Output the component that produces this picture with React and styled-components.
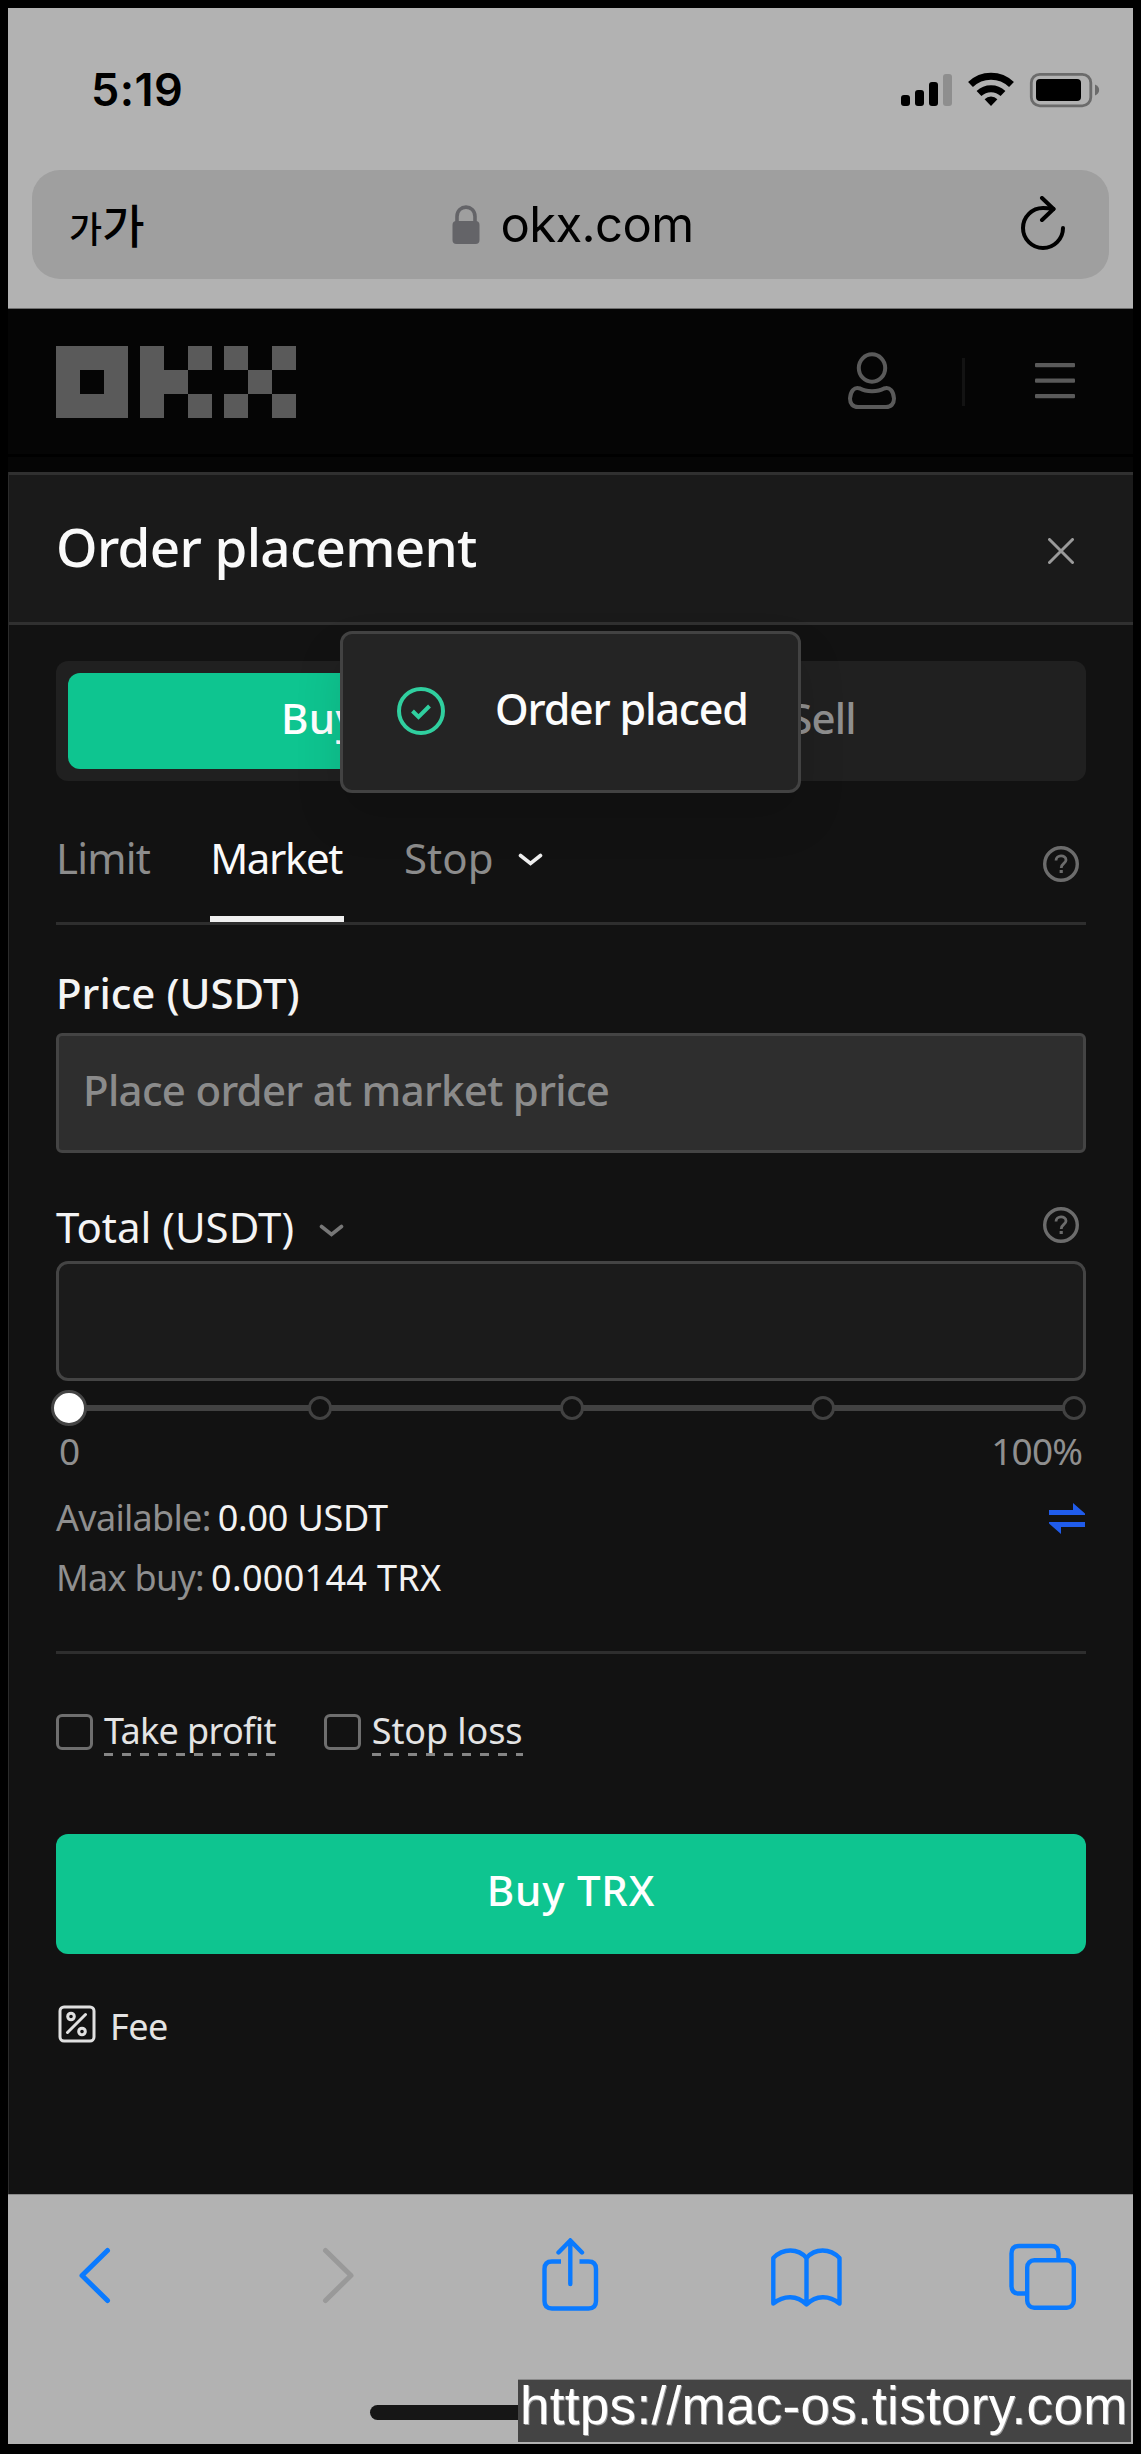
import React from 'react';
import styled, { createGlobalStyle } from 'styled-components';

const GlobalStyle = createGlobalStyle`
  * {
    box-sizing: border-box;
  }

  body {
    margin: 0;
    background-color: #000000;
    font-family: 'Noto Sans', 'Noto Sans CJK KR', sans-serif;
  }

  svg {
    display: block;
    flex-shrink: 0;
  }
`;

const Phone = styled.div`
  position: relative;
  display: flex;
  flex-direction: column;
  width: 1141px;
  height: 2454px;
  border: 8px solid #000000;
  border-bottom-width: 10px;
  background-color: #121212;
  overflow: hidden;
  white-space: nowrap;
`;

/* Safari top */

const BrowserTop = styled.div`
  height: 301px;
  padding: 0 24px;
  background-color: #b2b2b2;
  border-bottom: 1px solid #6e6e6e;
`;

const StatusBar = styled.div`
  display: flex;
  align-items: center;
  justify-content: space-between;
  height: 162px;
  padding: 2px 9px 0 59px;
`;

const Clock = styled.span`
  font-family: Inter, sans-serif;
  font-size: 45px;
  font-weight: 600;
  line-height: 60px;
  letter-spacing: 0.4px;
  color: #000000;
`;

const UrlBar = styled.div`
  display: grid;
  grid-template-columns: 1fr auto 1fr;
  align-items: center;
  height: 109px;
  padding: 0 43px 0 37px;
  border-radius: 28px;
  background-color: #9f9f9f;
`;

const TextSize = styled.div`
  display: flex;
  align-items: baseline;
  font-family: 'Noto Sans CJK KR', sans-serif;
  line-height: 60px;
  color: #000000;
`;

const Ga = styled.span`
  font-size: ${(props) => props.$size}px;
  font-weight: 500;
`;

const Domain = styled.div`
  display: flex;
  align-items: center;
  gap: 20px;
  margin-left: 11px;
  font-family: Inter, sans-serif;
  font-size: 49px;
  line-height: 60px;
  letter-spacing: -0.6px;
  color: #000000;
`;

const ReloadSlot = styled.div`
  justify-self: end;
`;

/* OKX header behind the sheet */

const SiteHeader = styled.div`
  display: flex;
  align-items: center;
  height: 148px;
  padding: 0 58px 0 48px;
  background-color: #050505;
  border-bottom: 3px solid #000000;
`;

const HeaderTools = styled.div`
  display: flex;
  align-items: center;
  margin: 0 0 2px auto;
`;

const HeaderDivider = styled.div`
  width: 3px;
  height: 48px;
  margin: 2px 70px 0 66px;
  background-color: #131313;
`;

const PageStrip = styled.div`
  height: 15px;
  background-color: #050505;
`;

/* Order sheet */

const Sheet = styled.div`
  flex: 1;
  border-left: 1px solid #2b2b2b;
`;

const SheetHeader = styled.div`
  display: flex;
  align-items: center;
  justify-content: space-between;
  height: 153px;
  padding: 4px 59px 0 47px;
  border-top: 3px solid #303030;
  border-bottom: 3px solid #303030;
  background-color: #1a1a1a;
`;

const SheetTitle = styled.h1`
  margin: 0 0 7px;
  font-size: 53px;
  font-weight: 500;
  line-height: 72px;
  letter-spacing: -0.65px;
  color: #fafafa;
`;

const SheetBody = styled.div`
  padding: 36px 47px 0 47px;
`;

const SideSwitch = styled.div`
  display: flex;
  height: 120px;
  padding: 12px;
  border-radius: 12px;
  background-color: #202020;
`;

const SideButton = styled.div`
  flex: 1;
  padding-bottom: 8px;
  border-radius: 12px;
  background-color: ${(props) => (props.$active ? '#0ec590' : 'transparent')};
  color: ${(props) => (props.$active ? '#ffffff' : '#8f8f8f')};
  font-size: 42px;
  font-weight: 500;
  line-height: 89px;
  letter-spacing: ${(props) => (props.$active ? 0.4 : -0.8)}px;
  text-align: center;
`;

const Tabs = styled.div`
  display: flex;
  height: 144px;
  padding-top: 46px;
  border-bottom: 3px solid #2e2e2e;
`;

const Tab = styled.div`
  display: flex;
  height: 95px;
  margin-right: 60px;
  padding-right: ${(props) => (props.$active ? 2 : 0)}px;
  border-bottom: 6px solid ${(props) => (props.$active ? '#efefef' : 'transparent')};
  color: ${(props) => (props.$active ? '#fafafa' : '#8c8c8c')};
  font-size: 42px;
  line-height: 61px;
  letter-spacing: ${(props) => props.$spacing}px;

  svg {
    margin: 26px 0 0 25px;
  }
`;

const HelpSlot = styled.div`
  margin: ${(props) => props.$top}px 7px 0 auto;
`;

const FieldLabel = styled.div`
  display: flex;
  margin: ${(props) => props.$margin};
  color: #f4f4f4;
  font-size: 42px;
  font-weight: ${(props) => props.$weight};
  line-height: 60px;
`;

const LabelChevron = styled.div`
  margin: 27px 0 0 25px;
`;

const Field = styled.div`
  height: 120px;
  padding: 0 24px;
  border: 3px solid #444444;
  border-radius: ${(props) => (props.$disabled ? 6 : 12)}px;
  background-color: ${(props) => (props.$disabled ? '#2e2e2e' : '#1b1b1b')};
  color: #8b8b8b;
  font-size: 42px;
  font-weight: 500;
  line-height: 107px;
  letter-spacing: -0.7px;
`;

const Slider = styled.div`
  position: relative;
  display: flex;
  align-items: center;
  justify-content: space-between;
  height: 36px;
  margin: 9px 0 0 -5px;
`;

const SliderTrack = styled.div`
  position: absolute;
  top: 15px;
  left: 18px;
  right: 12px;
  height: 6px;
  background-color: #424242;
`;

const SliderHandle = styled.div`
  position: relative;
  width: 36px;
  height: 36px;
  margin-right: -6px;
  border: 3px solid #444444;
  border-radius: 50%;
  background-color: #ffffff;
`;

const SliderStep = styled.div`
  position: relative;
  width: 24px;
  height: 24px;
  border: 3px solid #424242;
  border-radius: 50%;
  background-color: #121212;
`;

const SliderLabels = styled.div`
  display: flex;
  justify-content: space-between;
  padding: 0 4px 0 3px;
  color: #8f8f8f;
  font-size: 37px;
  line-height: 50px;
  letter-spacing: -0.9px;
`;

const Balances = styled.div`
  display: flex;
  justify-content: space-between;
  height: 166px;
  margin-top: 12px;
  border-bottom: 3px solid #2e2e2e;
`;

const BalanceRow = styled.div`
  color: #8f8f8f;
  font-size: 36px;
  line-height: 60px;
  letter-spacing: -0.7px;
`;

const BalanceValue = styled.span`
  margin-left: 7px;
  color: #f2f2f2;
  letter-spacing: ${(props) => props.$spacing}px;
`;

const SwapSlot = styled.div`
  margin: 15px 1px 0 0;
`;

const Triggers = styled.div`
  display: flex;
  margin-top: 57px;
`;

const Trigger = styled.div`
  display: flex;
  margin-right: 48px;
`;

const Checkbox = styled.div`
  width: 37px;
  height: 36px;
  margin: 3px 11px 0 0;
  border: 3px solid #6e6e6e;
  border-radius: 6px;
`;

const TriggerLabel = styled.div`
  height: 45px;
  color: #e4e4e4;
  font-size: 36px;
  line-height: 40px;
  letter-spacing: ${(props) => props.$spacing}px;
  background: repeating-linear-gradient(
      to right,
      #858585 0 9px,
      transparent 9px 18px
    )
    0 100% / 100% 3px no-repeat;
`;

const SubmitButton = styled.div`
  height: 120px;
  margin-top: 78px;
  border-radius: 12px;
  background-color: #0ec590;
  color: #ffffff;
  font-size: 42px;
  font-weight: 500;
  line-height: 112px;
  letter-spacing: 0.8px;
  text-align: center;
`;

const Fee = styled.div`
  display: flex;
  gap: 14px;
  margin-top: 51px;
  padding-left: 2px;
  color: #e4e4e4;
  font-size: 36px;
  line-height: 43px;
  letter-spacing: -0.5px;
`;

const Toast = styled.div`
  position: absolute;
  top: 623px;
  left: 332px;
  display: flex;
  align-items: center;
  width: 461px;
  height: 162px;
  padding: 0 0 3px 54px;
  border: 3px solid #424242;
  border-radius: 12px;
  background-color: #242424;
  box-shadow: 0 24px 48px rgba(0, 0, 0, 0.12);
`;

const ToastText = styled.span`
  margin: -3px 0 0 50px;
  color: #fcfcfc;
  font-size: 43px;
  font-weight: 500;
  line-height: 60px;
  letter-spacing: -1.2px;
`;

/* Safari bottom */

const BrowserBottom = styled.div`
  height: 250px;
  border-top: 1px solid #8a8a8a;
  background-color: #b2b2b2;
`;

const Toolbar = styled.div`
  display: flex;
  align-items: center;
  justify-content: space-between;
  height: 161px;
  padding: 0 55px 0 70px;
`;

const HomeIndicator = styled.div`
  width: 401px;
  height: 15px;
  margin: 49px 0 0 362px;
  border-radius: 8px;
  background-color: #161616;
`;

const Watermark = styled.div`
  position: absolute;
  right: 2px;
  bottom: 2px;
  width: 613px;
  height: 63px;
  padding-left: 2px;
  border-top: 1px solid #8a8a8a;
  background-color: #444444;
  color: #ffffff;
  font-family: 'Liberation Sans', Arial, sans-serif;
  font-size: 53px;
  line-height: 52px;
  letter-spacing: 0.3px;
  text-shadow: 1px 1px 0 #9a9a9a;
`;

function StatusIcons() {
  return (
    <svg width="200" height="36" viewBox="900 72 200 36">
      <rect x="901" y="95" width="9" height="11" rx="3" />
      <rect x="915" y="90" width="9" height="16" rx="3" />
      <rect x="929" y="82" width="9" height="24" rx="3" />
      <rect x="943" y="74" width="9" height="32" rx="3" fill="#8e8e8e" />
      <g fill="none" stroke="#000000" strokeWidth="7">
        <path d="M970.5 84.5a29.5 29.5 0 0 1 41 0" />
        <path d="M979 93.5a17.5 17.5 0 0 1 24 0" />
      </g>
      <path d="M984.6 99.2a9.2 9.2 0 0 1 12.8 0L991 106z" />
      <rect x="1031.3" y="74.3" width="59.5" height="31.5" rx="8.5" fill="none" stroke="#6b6b6b" strokeWidth="2.8" />
      <rect x="1036" y="79" width="45" height="22" rx="4" />
      <path d="M1095 84.5c5.5 2 5.5 9 0 11z" fill="#6b6b6b" />
    </svg>
  );
}

function LockIcon() {
  return (
    <svg width="28" height="40" viewBox="0 0 28 40">
      <path d="M5 18V11.5C5 -1 23 -1 23 11.5V18" fill="none" stroke="#646468" strokeWidth="3.6" />
      <rect x="0.5" y="16" width="27" height="23" rx="4" fill="#646468" />
    </svg>
  );
}

function ReloadIcon() {
  return (
    <svg width="46" height="58" viewBox="1020 195 46 58" fill="none" stroke="#000000" strokeWidth="4" strokeLinecap="round" strokeLinejoin="round">
      <path d="M1063 227a20 20 0 1 1 -20 -20q5 0 10.5 1" />
      <path d="M1042 197l11.5 11l-11.5 11" />
    </svg>
  );
}

function OkxLogo() {
  return (
    <svg width="240" height="72" viewBox="0 0 10 3" fill="#5a5a5a" shapeRendering="crispEdges">
      <path d="M0 0h3v3h-3zM1 1v1h1v-1z" fillRule="evenodd" />
      <path d="M3.5 0h1v1h1v1h-1v1h-1z" />
      <path d="M5.5 0h1v1h-1zM5.5 2h1v1h-1zM7 0h1v1h-1zM9 0h1v1h-1zM8 1h1v1h-1zM7 2h1v1h-1zM9 2h1v1h-1z" />
    </svg>
  );
}

function UserIcon() {
  return (
    <svg width="48" height="58" viewBox="848 351.5 48 58" fill="none" stroke="#5a5a5a" strokeWidth="4">
      <ellipse cx="872" cy="367.5" rx="13.2" ry="13.7" />
      <path d="M860 388C866 391.5 878 391.5 884 388C890 386 893.5 391 894 398C894 403.5 891 406.5 886 406.5H858C853 406.5 850 403.5 850 398C850.5 391 854 386 860 388Z" strokeLinejoin="round" />
    </svg>
  );
}

function MenuIcon() {
  return (
    <svg width="40" height="36" viewBox="0 0 40 36" fill="#5a5a5a">
      <rect y="0" width="40" height="4.2" rx="1" />
      <rect y="15.5" width="40" height="4.2" rx="1" />
      <rect y="31" width="40" height="4.2" rx="1" />
    </svg>
  );
}

function CloseIcon() {
  return (
    <svg width="26" height="26" viewBox="0 0 26 26" stroke="#9a9a9a" strokeWidth="3" strokeLinecap="round">
      <path d="M1.5 1.5L24.5 24.5M24.5 1.5L1.5 24.5" />
    </svg>
  );
}

function ChevronDown({ color }) {
  return (
    <svg width="25" height="14" viewBox="0 0 25 14" fill="none" stroke={color} strokeWidth="3.6" strokeLinecap="round">
      <path d="M2.5 2.5L12.5 10.5L22.5 2.5" />
    </svg>
  );
}

function HelpIcon() {
  return (
    <svg width="36" height="36" viewBox="0 0 36 36" fill="none" stroke="#6c6c6c">
      <circle cx="18" cy="18" r="16.3" strokeWidth="3.4" />
      <path d="M13 14.5C13 8.5 23 8.5 23 14C23 17.5 18.2 17.5 18.2 22" strokeWidth="2.8" />
      <rect x="16.6" y="24" width="3.2" height="3" fill="#6c6c6c" stroke="none" />
    </svg>
  );
}

function SwapIcon() {
  return (
    <svg width="36" height="31" viewBox="0 0 36 31" fill="#205ceb">
      <path d="M0 7H24V0L36 10.5V12H0z" />
      <path d="M36 24H12V31L0 20.5V19H36z" />
    </svg>
  );
}

function FeeIcon() {
  return (
    <svg width="38" height="38" viewBox="0 0 38 38" fill="none" stroke="#e0e0e0" strokeWidth="3">
      <rect x="2" y="2" width="34" height="34" rx="4" />
      <path d="M9.5 27.5L27.5 9.5" strokeLinecap="round" />
      <circle cx="13" cy="11.5" r="3.3" />
      <circle cx="24" cy="26.5" r="3.3" />
    </svg>
  );
}

function CheckIcon() {
  return (
    <svg width="48" height="50" viewBox="0 0 48 50" fill="none" stroke="#30cf9f" strokeWidth="4">
      <circle cx="24" cy="25" r="22" />
      <path d="M15.5 25L21.5 31L32.5 20" />
    </svg>
  );
}

function ToolbarIcons() {
  return (
    <>
      <svg width="71" height="76" viewBox="78 2238 71 76" fill="none" stroke="#0a7aff" strokeWidth="5" strokeLinecap="round" strokeLinejoin="round">
        <path d="M107.5 2250.5L82 2275.5L107.5 2300.5" />
      </svg>
      <svg width="63" height="76" viewBox="313 2238 63 76" fill="none" stroke="#999999" strokeWidth="5" strokeLinecap="round" strokeLinejoin="round">
        <path d="M325.5 2250.5L351 2275.5L325.5 2300.5" />
      </svg>
      <svg width="66" height="76" viewBox="540 2237 66 76" fill="none" stroke="#0a7aff" strokeWidth="4.4">
        <path d="M561 2260.5H552Q544.5 2260.5 544.5 2268V2300Q544.5 2307.5 552 2307.5H588.5Q596 2307.5 596 2300V2268Q596 2260.5 588.5 2260.5H579.5" />
        <path d="M570.3 2283V2240M558.5 2251.5L570.3 2239.5L582 2251.5" strokeLinecap="round" />
      </svg>
      <svg width="74" height="76" viewBox="770 2237 74 76" fill="none" stroke="#0a7aff" strokeWidth="4.4" strokeLinejoin="round">
        <path d="M806.5 2257C798 2247 783 2247 773.3 2257V2302.5C784 2294 797 2294 806.5 2303.5C816 2294 829 2294 839.5 2302.5V2257C830 2247 815 2247 806.5 2257V2303" />
      </svg>
      <svg width="70" height="76" viewBox="1008 2237 70 76" fill="none" stroke="#0a7aff" strokeWidth="4.4">
        <path d="M1027 2292.5H1019Q1011.5 2292.5 1011.5 2285V2252.5Q1011.5 2245 1019 2245H1051Q1058.5 2245 1058.5 2252.5V2259" />
        <rect x="1027.2" y="2259.3" width="46.6" height="47.5" rx="7" />
      </svg>
    </>
  );
}

function App() {
  return (
    <Phone>
      <GlobalStyle />
      <BrowserTop>
        <StatusBar>
          <Clock>5:19</Clock>
          <StatusIcons />
        </StatusBar>
        <UrlBar>
          <TextSize>
            <Ga $size={36}>가</Ga>
            <Ga $size={46}>가</Ga>
          </TextSize>
          <Domain>
            <LockIcon />
            okx.com
          </Domain>
          <ReloadSlot>
            <ReloadIcon />
          </ReloadSlot>
        </UrlBar>
      </BrowserTop>

      <SiteHeader>
        <OkxLogo />
        <HeaderTools>
          <UserIcon />
          <HeaderDivider />
          <MenuIcon />
        </HeaderTools>
      </SiteHeader>
      <PageStrip />

      <Sheet>
        <SheetHeader>
          <SheetTitle>Order placement</SheetTitle>
          <CloseIcon />
        </SheetHeader>
        <SheetBody>
          <SideSwitch>
            <SideButton $active>Buy</SideButton>
            <SideButton>Sell</SideButton>
          </SideSwitch>
          <Tabs>
            <Tab $spacing={-0.8}>Limit</Tab>
            <Tab $active $spacing={-1.4}>
              Market
            </Tab>
            <Tab $spacing={0}>
              Stop
              <ChevronDown color="#eeeeee" />
            </Tab>
            <HelpSlot $top={19}>
              <HelpIcon />
            </HelpSlot>
          </Tabs>

          <FieldLabel $weight={500} $margin="38px 0 10px">
            Price (USDT)
          </FieldLabel>
          <Field $disabled>Place order at market price</Field>

          <FieldLabel $weight={400} $margin="44px 0 4px">
            Total (USDT)
            <LabelChevron>
              <ChevronDown color="#777777" />
            </LabelChevron>
            <HelpSlot $top={10}>
              <HelpIcon />
            </HelpSlot>
          </FieldLabel>
          <Field />

          <Slider>
            <SliderTrack />
            <SliderHandle />
            <SliderStep />
            <SliderStep />
            <SliderStep />
            <SliderStep />
          </Slider>
          <SliderLabels>
            <span>0</span>
            <span>100%</span>
          </SliderLabels>

          <Balances>
            <div>
              <BalanceRow>
                Available:
                <BalanceValue $spacing={-0.2}>0.00 USDT</BalanceValue>
              </BalanceRow>
              <BalanceRow>
                Max buy:
                <BalanceValue $spacing={0.3}>0.000144 TRX</BalanceValue>
              </BalanceRow>
            </div>
            <SwapSlot>
              <SwapIcon />
            </SwapSlot>
          </Balances>

          <Triggers>
            <Trigger>
              <Checkbox />
              <TriggerLabel $spacing={-0.65}>Take profit</TriggerLabel>
            </Trigger>
            <Trigger>
              <Checkbox />
              <TriggerLabel $spacing={-0.1}>Stop loss</TriggerLabel>
            </Trigger>
          </Triggers>

          <SubmitButton>Buy TRX</SubmitButton>
          <Fee>
            <FeeIcon />
            Fee
          </Fee>
        </SheetBody>
      </Sheet>

      <BrowserBottom>
        <Toolbar>
          <ToolbarIcons />
        </Toolbar>
        <HomeIndicator />
      </BrowserBottom>

      <Toast>
        <CheckIcon />
        <ToastText>Order placed</ToastText>
      </Toast>
      <Watermark>https://mac-os.tistory.com</Watermark>
    </Phone>
  );
}

export default App;
